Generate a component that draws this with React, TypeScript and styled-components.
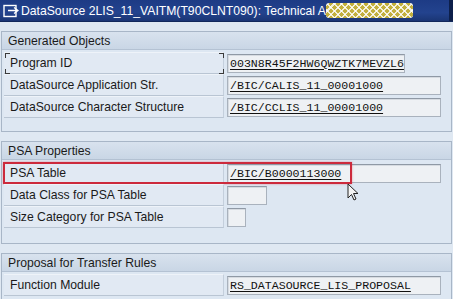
import React from 'react';
import styled, { createGlobalStyle } from 'styled-components';

const GlobalStyle = createGlobalStyle`
  html, body {
    margin: 0;
    padding: 0;
    background: #dfe8f2;
    overflow: hidden;
  }
  body {
    font-family: 'Liberation Sans', Arial, sans-serif;
  }
`;

const Window = styled.div`
  width: 453px;
  height: 299px;
  position: relative;
  overflow: hidden;
  background: #dfe8f2;
`;

const TitleBar = styled.div`
  height: 21px;
  display: flex;
  align-items: center;
  padding-left: 3px;
  background: linear-gradient(to bottom, #1d3b85 0%, #23438e 60%, #1a3574 100%);
  border-bottom: 1px solid #12285c;
  color: #fff;
`;

const TitleText = styled.span`
  flex: none;
  width: 307px;
  overflow: hidden;
  font-size: 12.2px;
  margin-left: 2px;
  white-space: nowrap;
`;

const Hatch = styled.span`
  flex: none;
  width: 87px;
  height: 15px;
  margin-left: -2px;
  border-radius: 3px;
  background-color: #c2b03e;
  background-image:
    repeating-linear-gradient(45deg, rgba(255, 255, 255, 0.8) 0 1.5px, transparent 1.5px 5px),
    repeating-linear-gradient(-45deg, rgba(255, 255, 255, 0.8) 0 1.5px, transparent 1.5px 5px);
`;

const TitleEdge = styled.span`
  margin-left: auto;
  width: 4px;
  height: 21px;
  background: #0d1f4a;
`;

const Body = styled.div`
  padding: 9px 1px 0 1px;
  display: flex;
  flex-direction: column;
  gap: 9px;
`;

const Group = styled.section<{ $pad: number }>`
  border: 1px solid #a8b6c7;
  background: #dde7f2;
  padding-bottom: ${p => p.$pad}px;
`;

const GroupHeader = styled.div`
  height: 17px;
  display: flex;
  align-items: center;
  padding-left: 6px;
  font-size: 12.2px;
  color: #1a1a1a;
  background: linear-gradient(to bottom, #d8e2ee 0%, #c9d6e5 100%);
  border-bottom: 1px solid #b4c2d3;
  margin-bottom: 2px;
`;

const Row = styled.div`
  position: relative;
  height: 22px;
  display: grid;
  grid-template-columns: 222px 1fr;
  align-items: center;
`;

const Label = styled.div<{ $focus?: boolean }>`
  position: relative;
  height: 22px;
  box-sizing: border-box;
  display: flex;
  align-items: center;
  padding-left: 6px;
  margin-left: 2px;
  font-size: 12.2px;
  color: #1a1a1a;
  border-top: 1px solid #eef3f9;
  border-bottom: 1px solid #b9c5d3;
  border-right: 1px solid #c4cfdc;
  background: #e1e9f3;

  ${p => p.$focus && `
    &::after {
      content: '';
      position: absolute;
      inset: 0 -1px -1px 1px;
      background:
        linear-gradient(#3a3a3a, #3a3a3a) left top / 5px 1px no-repeat,
        linear-gradient(#3a3a3a, #3a3a3a) left top / 1px 5px no-repeat,
        linear-gradient(#3a3a3a, #3a3a3a) left bottom / 5px 1px no-repeat,
        linear-gradient(#3a3a3a, #3a3a3a) left bottom / 1px 5px no-repeat,
        linear-gradient(#3a3a3a, #3a3a3a) right top / 5px 1px no-repeat,
        linear-gradient(#3a3a3a, #3a3a3a) right top / 1px 5px no-repeat,
        linear-gradient(#3a3a3a, #3a3a3a) right bottom / 5px 1px no-repeat,
        linear-gradient(#3a3a3a, #3a3a3a) right bottom / 1px 5px no-repeat;
    }
  `}
`;

const Field = styled.div<{ $w: number }>`
  width: ${p => p.$w}px;
  height: 19px;
  margin-left: 3px;
  box-sizing: border-box;
  display: flex;
  align-items: center;
  padding-left: 2px;
  border: 1px solid #a9b2bd;
  border-top-color: #8f99a5;
  background: #eef1f4;
  box-shadow: inset 1px 1px 0 #d6dbe1;
  font-family: 'Liberation Mono', 'Courier New', monospace;
  font-size: 11.6px;
  color: #111;
  overflow: hidden;
  white-space: nowrap;
`;

const Value = styled.span`
  text-decoration: underline;
  text-underline-offset: 2px;
`;

const Highlight = styled.div`
  position: absolute;
  left: 1px;
  top: 0;
  width: 349px;
  height: 22px;
  box-sizing: border-box;
  border: 2px solid #cc2a3c;
  box-shadow: 0 0 2px rgba(220, 60, 80, 0.5);
  pointer-events: none;
`;

const Cursor = styled.svg`
  position: absolute;
  left: 347px;
  top: 183px;
`;

const DocIcon = () => (
  <svg width="16" height="14" viewBox="0 0 16 14">
    <rect x="1" y="1.5" width="12" height="11" fill="none" stroke="#fff" strokeWidth="1.4" />
    <path d="M5 6.5 H15 M11 3.5 L15 6.5 L11 9.5" fill="none" stroke="#fff" strokeWidth="1.3" />
  </svg>
);

type RowData = { label: string; value?: string; width: number; focus?: boolean; marked?: boolean };

const groups: { title: string; pad: number; rows: RowData[] }[] = [
  {
    title: 'Generated Objects',
    pad: 13,
    rows: [
      { label: 'Program ID', value: '003N8R45F2HW6QWZTK7MEVZL6', width: 178, focus: true },
      { label: 'DataSource Application Str.', value: '/BIC/CALIS_11_00001000', width: 214 },
      { label: 'DataSource Character Structure', value: '/BIC/CCLIS_11_00001000', width: 214 },
    ],
  },
  {
    title: 'PSA Properties',
    pad: 15,
    rows: [
      { label: 'PSA Table', value: '/BIC/B0000113000', width: 214, marked: true },
      { label: 'Data Class for PSA Table', width: 40 },
      { label: 'Size Category for PSA Table', width: 19 },
    ],
  },
  {
    title: 'Proposal for Transfer Rules',
    pad: 10,
    rows: [{ label: 'Function Module', value: 'RS_DATASOURCE_LIS_PROPOSAL', width: 214 }],
  },
];

const App = () => (
  <Window>
    <GlobalStyle />
    <TitleBar>
      <DocIcon />
      <TitleText>DataSource 2LIS_11_VAITM(T90CLNT090): Technical A</TitleText>
      <Hatch />
      <TitleEdge />
    </TitleBar>
    <Body>
      {groups.map(g => (
        <Group key={g.title} $pad={g.pad}>
          <GroupHeader>{g.title}</GroupHeader>
          {g.rows.map(r => (
            <Row key={r.label}>
              <Label $focus={r.focus}>{r.label}</Label>
              <Field $w={r.width}>{r.value && <Value>{r.value}</Value>}</Field>
              {r.marked && <Highlight />}
            </Row>
          ))}
        </Group>
      ))}
    </Body>
    <Cursor width="16" height="20" viewBox="0 0 16 20">
      <path d="M1 1 L1 15 L4.5 11.5 L7 17 L9 16 L6.5 10.5 L11 10.5 Z" fill="#f4f4f4" stroke="#222" strokeWidth="1" />
    </Cursor>
  </Window>
);

export default App;
